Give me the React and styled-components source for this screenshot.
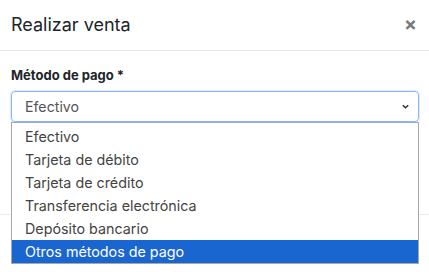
import React from "react";
import styled, { createGlobalStyle } from "styled-components";

const Global = createGlobalStyle`
  html, body { margin: 0; padding: 0; background: #fff; }
  body { font-family: Inter, "Noto Sans", sans-serif; color: #212529; overflow: hidden; }
`;

const Modal = styled.div`
  width: 429px;
  height: 272px;
  display: flex;
  flex-direction: column;
  background: #fff;
`;

const Header = styled.div`
  height: 51px;
  box-sizing: border-box;
  padding: 0 12px 2px 11px;
  display: flex;
  align-items: center;
  justify-content: space-between;
  border-bottom: 1px solid #e6e6e6;
`;

const Title = styled.h5`
  margin: 0;
  font-size: 18px;
  font-weight: 400;
  color: #212529;
`;

const Close = styled.span`
  font-size: 19px;
  font-weight: 700;
  color: #7a7a7a;
  line-height: 1;
`;

const Body = styled.div`
  height: 163px;
  box-sizing: border-box;
  padding: 16px 10px 0 11px;
`;

const Label = styled.div`
  font-size: 13px;
  font-weight: 700;
  color: #212529;
  margin-bottom: 8px;
`;

const SelectWrap = styled.div`
  position: relative;
`;

const Select = styled.div`
  height: 31px;
  box-sizing: border-box;
  border: 1px solid #86b7fe;
  border-radius: 4px;
  box-shadow: 0 0 0 1px rgba(134, 183, 254, 0.25);
  display: flex;
  align-items: center;
  justify-content: space-between;
  padding: 0 8px 0 13px;
  font-size: 14.2px;
  color: #555;
`;

const Chevron = styled.svg`
  width: 9px;
  height: 9px;
`;

const List = styled.ul`
  position: absolute;
  left: 0;
  right: 0;
  top: 31px;
  margin: 0;
  padding: 2px 0 0;
  list-style: none;
  background: #fff;
  border: 1px solid #a8a8a8;
  z-index: 2;
`;

const Option = styled.li`
  height: 23px;
  display: flex;
  align-items: center;
  padding-left: 13px;
  font-size: 14.3px;
  color: ${(p) => (p.$active ? "#fff" : "#444")};
  background: ${(p) => (p.$active ? "#1a66d1" : "transparent")};
`;

const Footer = styled.div`
  flex: 1;
  border-top: 1px solid #ececec;
`;

const options = [
  "Efectivo",
  "Tarjeta de débito",
  "Tarjeta de crédito",
  "Transferencia electrónica",
  "Depósito bancario",
  "Otros métodos de pago",
];

export default function App() {
  return (
    <>
      <Global />
      <Modal>
        <Header>
          <Title>Realizar venta</Title>
          <Close>×</Close>
        </Header>
        <Body>
          <Label>Método de pago *</Label>
          <SelectWrap>
            <Select>
              <span>Efectivo</span>
              <Chevron viewBox="0 0 10 10">
                <path d="M2 3.5 L5 6.5 L8 3.5" fill="none" stroke="#333" strokeWidth="1.6" />
              </Chevron>
            </Select>
            <List>
              {options.map((o, i) => (
                <Option key={o} $active={i === options.length - 1}>
                  {o}
                </Option>
              ))}
            </List>
          </SelectWrap>
        </Body>
        <Footer />
      </Modal>
    </>
  );
}
